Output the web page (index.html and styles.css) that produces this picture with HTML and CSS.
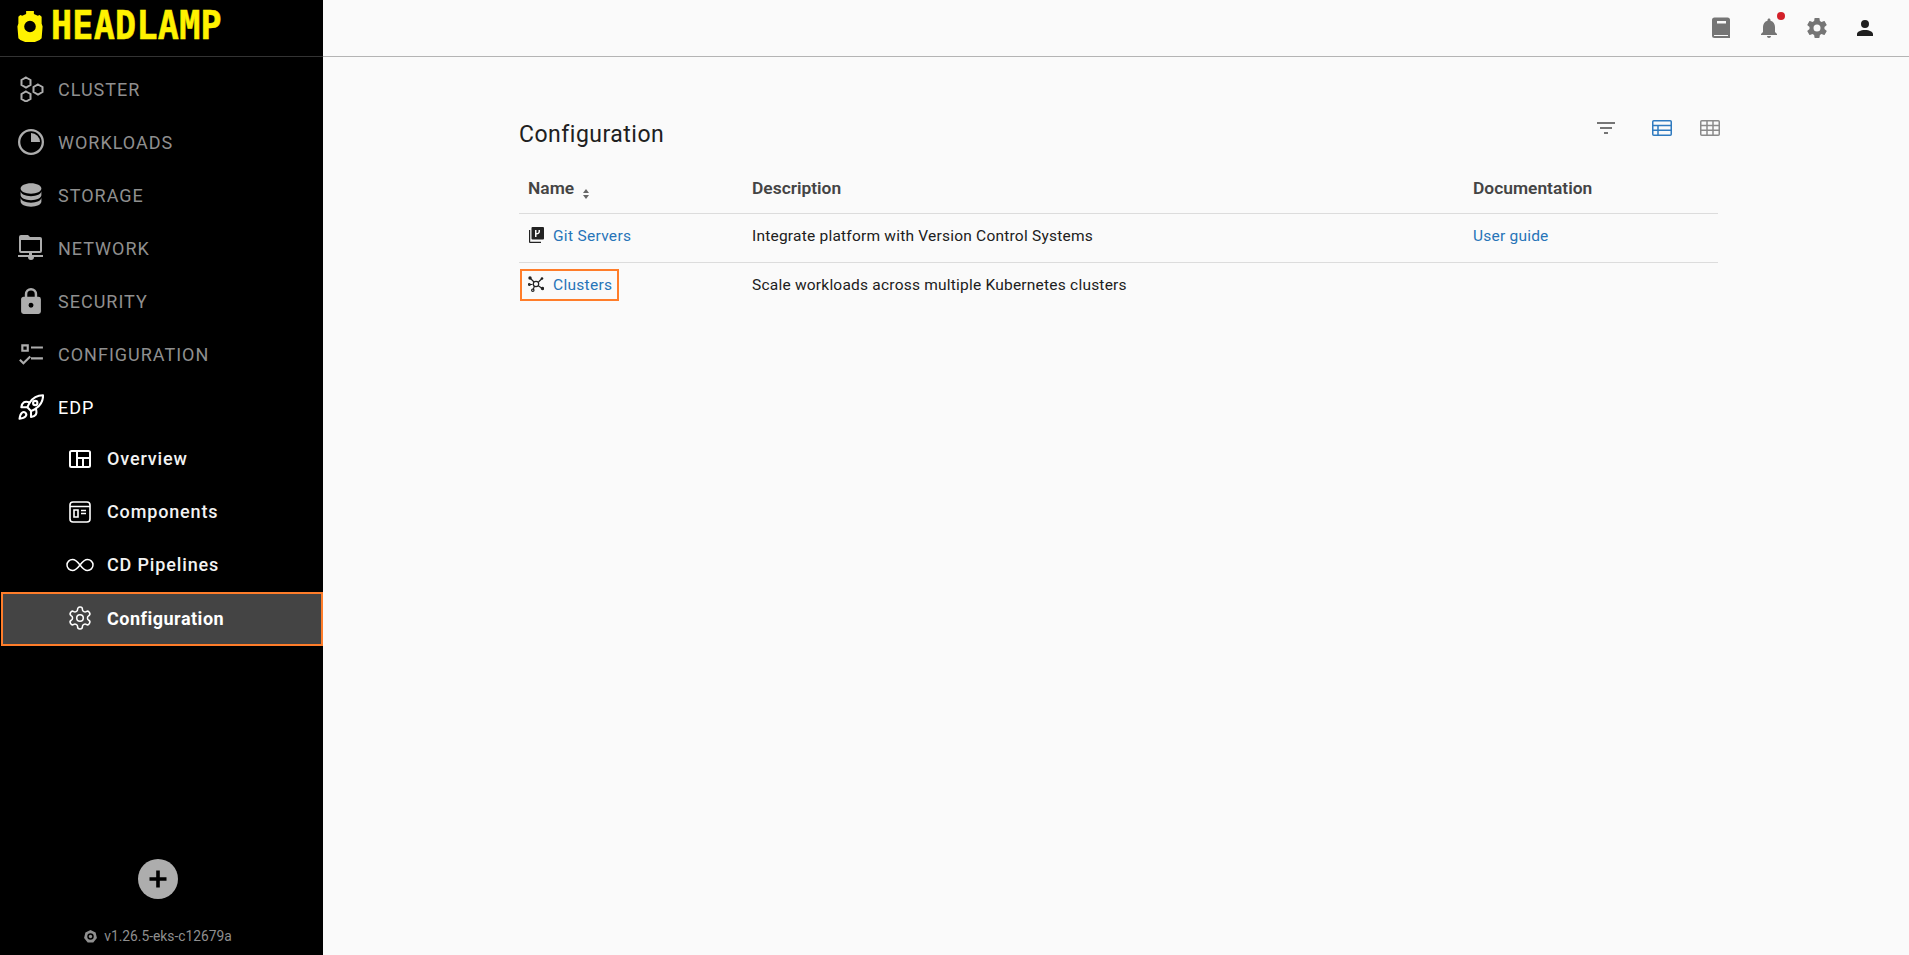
FILE: index.html
```html
<!DOCTYPE html>
<html lang="en">
<head>
    <meta charset="UTF-8">
    <title>Headlamp - Configuration</title>
    <link rel="stylesheet" href="styles.css">
</head>
<body>

<!-- Sidebar -->
<aside class="sidebar">
    <div class="logo">
        <svg class="logo-icon" viewBox="0 0 26 32"><path fill-rule="evenodd" d="M9 0h8v3l4 2 2-1 2 2v7l1 3-1 12-2 2-5 2H8l-5-2-2-2L0 16l1-3V6l2-2 2 1 4-2V0zm4 10a6 6 0 1 0 0 12 6 6 0 0 0 0-12z"/></svg>
        <span class="logo-text">HEADLAMP</span>
    </div>

    <nav class="nav">
        <a class="nav-item">
            <svg class="nav-icon nav-icon-line" viewBox="0 1 26 26" stroke="currentColor" stroke-width="2"><path d="M8 2.500l4.500 2.500v5L8 12.500 3.500 10V5zM8 16.500l4.500 2.500v5L8 26.500 3.500 24v-5zM20 9.500l4.500 2.500v5L20 19.500 15.500 17v-5z"/></svg>
            CLUSTER
        </a>
        <a class="nav-item">
            <svg class="nav-icon" viewBox="0 0 26 26"><path d="M13 0a13 13 0 1 0 0 26 13 13 0 0 0 0-26zm0 2.300a10.700 10.700 0 1 1 0 21.400 10.700 10.700 0 0 1 0-21.400z"/><path d="M13 4a9 9 0 0 1 9 9h-9z"/></svg>
            WORKLOADS
        </a>
        <a class="nav-item">
            <svg class="nav-icon" viewBox="2 2 20 20"><path d="M12,3C7.58,3 4,4.79 4,7C4,9.21 7.58,11 12,11C16.42,11 20,9.21 20,7C20,4.79 16.42,3 12,3M4,9V12C4,14.21 7.58,16 12,16C16.42,16 20,14.21 20,12V9C20,11.21 16.42,13 12,13C7.58,13 4,11.21 4,9M4,14V17C4,19.21 7.58,21 12,21C16.42,21 20,19.21 20,17V14C20,16.21 16.42,18 12,18C7.58,18 4,16.21 4,14Z"/></svg>
            STORAGE
        </a>
        <a class="nav-item">
            <svg class="nav-icon" viewBox="0 0 26 26"><path fill-rule="evenodd" d="M3 0h7l2 2h10a2 2 0 0 1 2 2v12a2 2 0 0 1-2 2h-8v2h11v2H16a3 3 0 0 1-6 0H0v-2h11v-2H3a2 2 0 0 1-2-2V2a2 2 0 0 1 2-2zm0 5v11h19V5z"/></svg>
            NETWORK
        </a>
        <a class="nav-item">
            <svg class="nav-icon" viewBox="3 1 18 21"><path d="M12,17A2,2 0 0,0 14,15C14,13.89 13.1,13 12,13A2,2 0 0,0 10,15A2,2 0 0,0 12,17M18,8A2,2 0 0,1 20,10V20A2,2 0 0,1 18,22H6A2,2 0 0,1 4,20V10C4,8.89 4.9,8 6,8H7V6A5,5 0 0,1 12,1A5,5 0 0,1 17,6V8H18M12,3A3,3 0 0,0 9,6V8H15V6A3,3 0 0,0 12,3Z"/></svg>
            SECURITY
        </a>
        <a class="nav-item">
            <svg class="nav-icon" viewBox="0 0 24 24"><path d="M3,3H10V10H3V3M5,5V8H8V5H5M12,5H23V7H12V5M12,15H23V17H12V15M5,22L1,18L2.400,16.600L5,19.200L10.600,13.600L12,15L5,22Z"/></svg>
            CONFIGURATION
        </a>
        <a class="nav-item nav-open">
            <svg class="nav-icon" viewBox="1.500 1 21 21.500" stroke="currentColor" stroke-width="1.700" stroke-linecap="round" stroke-linejoin="round"><path d="M4.500 16.500c-1.500 1.260-2 5-2 5s3.740-.5 5-2c.71-.84.7-2.130-.09-2.910a2.180 2.180 0 0 0-2.910-.09z"/><path d="m12 15-3-3a22 22 0 0 1 2-3.950A12.880 12.880 0 0 1 22 2c0 2.720-.78 7.500-6 11a22.350 22.350 0 0 1-4 2z"/><path d="M9 12H4s.55-3.030 2-4c1.620-1.080 5 0 5 0"/><path d="M12 15v5s3.030-.55 4-2c1.080-1.620 0-5 0-5"/><circle cx="15.500" cy="8.500" r="1.800"/></svg>
            EDP
        </a>
        <a class="nav-item sub-item">
            <svg class="sub-icon" viewBox="0 0 24 24" fill="none" stroke="currentColor" stroke-width="2"><rect x="2" y="4" width="20" height="16" rx="1.500"/><path d="M9 4v16M9 11h13M15 11v9"/></svg>
            Overview
        </a>
        <a class="nav-item sub-item">
            <svg class="sub-icon" viewBox="0 0 24 24" fill="none" stroke="currentColor" stroke-width="1.600"><rect x="2" y="2" width="20" height="20" rx="3"/><path d="M2 6.500h20M6 10h4v7H6zM13 10.500h5M13 13.500h5"/></svg>
            Components
        </a>
        <a class="nav-item sub-item">
            <svg class="sub-icon sub-wide" viewBox="0 0 28 14" fill="none" stroke="currentColor" stroke-width="1.500"><path d="M14 7C11 3 9 1.500 6.500 1.500a5.500 5.500 0 0 0 0 11C9 12.500 11 11 14 7c3-4 5-5.500 7.500-5.500a5.500 5.500 0 0 1 0 11C19 12.500 17 11 14 7z"/></svg>
            CD Pipelines
        </a>
        <a class="nav-item sub-item nav-active">
            <svg class="sub-icon" viewBox="1 1 22 22" fill="none" stroke="currentColor" stroke-width="1.400"><path d="M12.220 2h-.44a2 2 0 0 0-2 2v.18a2 2 0 0 1-1 1.730l-.43.25a2 2 0 0 1-2 0l-.15-.08a2 2 0 0 0-2.730.73l-.22.38a2 2 0 0 0 .73 2.730l.15.1a2 2 0 0 1 1 1.720v.51a2 2 0 0 1-1 1.740l-.15.09a2 2 0 0 0-.73 2.730l.22.38a2 2 0 0 0 2.730.73l.15-.08a2 2 0 0 1 2 0l.43.25a2 2 0 0 1 1 1.730V20a2 2 0 0 0 2 2h.44a2 2 0 0 0 2-2v-.18a2 2 0 0 1 1-1.730l.43-.25a2 2 0 0 1 2 0l.15.08a2 2 0 0 0 2.730-.73l.22-.39a2 2 0 0 0-.73-2.730l-.15-.08a2 2 0 0 1-1-1.740v-.5a2 2 0 0 1 1-1.740l.15-.09a2 2 0 0 0 .73-2.730l-.22-.38a2 2 0 0 0-2.730-.73l-.15.08a2 2 0 0 1-2 0l-.43-.25a2 2 0 0 1-1-1.730V4a2 2 0 0 0-2-2z"/><circle cx="12" cy="12" r="3"/></svg>
            Configuration
        </a>
    </nav>

    <div class="sidebar-footer">
        <button class="add-btn">
            <svg viewBox="0 0 24 24"><path d="M10.200 3.500h3.600v6.700h6.700v3.600h-6.700v6.700h-3.600v-6.700H3.500v-3.600h6.700z"/></svg>
        </button>
        <div class="version">
            <svg viewBox="0 0 14 14"><path fill-rule="evenodd" d="M7 0l5.500 2.700 1.400 6L10 13.500H4L.1 8.700l1.400-6zm0 3.500a3.500 3.500 0 1 0 0 7 3.500 3.500 0 0 0 0-7z"/><circle cx="7" cy="7" r="1.800"/></svg>
            v1.26.5-eks-c12679a
        </div>
    </div>
</aside>

<!-- Main part -->
<div class="main">
    <header class="topbar">
        <div class="icon-btn">
            <svg viewBox="0 0 24 24"><path fill-rule="evenodd" d="M5.500 1.500h13A2.500 2.500 0 0 1 21 4v18H5.500A2.500 2.500 0 0 1 3 19.500V4a2.500 2.500 0 0 1 2.500-2.500zM8 5v2.500h9V5zM5 19v.5a.5.5 0 0 0 .5.5H19v-1z"/></svg>
        </div>
        <div class="icon-btn bell">
            <svg viewBox="0 0 24 24"><path d="M12 22c1.100 0 2-.9 2-2h-4c0 1.100.89 2 2 2zm6-6v-5c0-3.070-1.640-5.640-4.500-6.320V4c0-.83-.67-1.500-1.500-1.500s-1.500.67-1.500 1.500v.68C7.630 5.360 6 7.920 6 11v5l-2 2v1h16v-1l-2-2z"/></svg>
            <span class="badge"></span>
        </div>
        <div class="icon-btn">
            <svg viewBox="0 0 24 24"><path d="M12,15.500A3.500,3.500 0 0,1 8.500,12A3.500,3.500 0 0,1 12,8.500A3.500,3.500 0 0,1 15.500,12A3.500,3.500 0 0,1 12,15.500M19.430,12.970C19.470,12.650 19.500,12.330 19.500,12C19.500,11.670 19.470,11.340 19.430,11L21.540,9.370C21.730,9.220 21.780,8.950 21.660,8.730L19.660,5.270C19.540,5.050 19.270,4.960 19.050,5.050L16.560,6.050C16.040,5.660 15.500,5.320 14.870,5.070L14.500,2.420C14.460,2.180 14.250,2 14,2H10C9.750,2 9.540,2.180 9.500,2.420L9.130,5.070C8.500,5.320 7.960,5.660 7.440,6.050L4.950,5.050C4.730,4.960 4.460,5.050 4.340,5.270L2.340,8.730C2.210,8.950 2.270,9.220 2.460,9.370L4.570,11C4.530,11.340 4.500,11.670 4.500,12C4.500,12.330 4.530,12.650 4.570,12.970L2.460,14.630C2.270,14.780 2.210,15.050 2.340,15.270L4.340,18.730C4.460,18.950 4.730,19.030 4.950,18.950L7.440,17.940C7.960,18.340 8.500,18.680 9.130,18.930L9.500,21.580C9.540,21.820 9.750,22 10,22H14C14.250,22 14.460,21.820 14.500,21.580L14.870,18.930C15.500,18.670 16.040,18.340 16.560,17.940L19.050,18.950C19.270,19.030 19.540,18.950 19.660,18.730L21.660,15.270C21.780,15.050 21.730,14.780 21.540,14.630L19.430,12.970Z"/></svg>
        </div>
        <div class="icon-btn user">
            <svg viewBox="0 0 24 24"><path d="M12,4A4,4 0 0,1 16,8A4,4 0 0,1 12,12A4,4 0 0,1 8,8A4,4 0 0,1 12,4M12,14C16.420,14 20,15.790 20,18V20H4V18C4,15.790 7.580,14 12,14Z"/></svg>
        </div>
    </header>

    <main class="content">
        <div class="title-row">
            <h1 class="title">Configuration</h1>
            <div class="view-tools">
                <svg class="tool filter" viewBox="0 0 24 24"><path d="M10 18h4v-2h-4v2zM3 6v2h18V6H3zm3 7h12v-2H6v2z"/></svg>
                <svg class="tool tool-on" viewBox="0 0 24 24" fill="none" stroke="currentColor" stroke-width="1.500"><rect x="2.750" y="4.750" width="18.500" height="14.500" rx="1"/><path d="M3 9.500h18M3 14.300h18M8 9.500v9.700"/></svg>
                <svg class="tool" viewBox="0 0 24 24" fill="none" stroke="currentColor" stroke-width="1.500"><rect x="2.750" y="4.750" width="18.500" height="14.500" rx="1"/><path d="M3 9.500h18M3 14.300h18M9 5v14M15 5v14"/></svg>
            </div>
        </div>

        <table class="config-table">
            <thead>
                <tr>
                    <th class="col-name">Name <span class="sort"><i class="up"></i><i class="down"></i></span></th>
                    <th class="col-desc">Description</th>
                    <th>Documentation</th>
                </tr>
            </thead>
            <tbody>
                <tr>
                    <td>
                        <a class="row-link">
                            <svg viewBox="0 0 16 16"><path fill-rule="evenodd" d="M4.500 0H15a1 1 0 0 1 1 1v10.500a1 1 0 0 1-1 1H4.500a1 1 0 0 1-1-1V1a1 1 0 0 1 1-1zM7 3v7h1.500V7.500c1.800 0 3.500-1 3.500-3V3h-1.500v1.500c0 1-.8 1.500-2 1.500V3z"/><path d="M1 3h1.200v11.800H13V16H2a1 1 0 0 1-1-1z"/></svg>
                            Git Servers
                        </a>
                    </td>
                    <td>Integrate platform with Version Control Systems</td>
                    <td><a class="doc-link">User guide</a></td>
                </tr>
                <tr>
                    <td>
                        <a class="row-link row-focus">
                            <svg viewBox="0 0 16 16" fill="none" stroke="currentColor" stroke-width="1.200"><path d="M2 2l4 4M14 2.500L10.500 6M1.500 8.500h3M14.500 12.500L10.500 10M5 14l1.500-4"/><circle cx="8" cy="8" r="2.700"/><g fill="currentColor" stroke="none"><circle cx="2" cy="2" r="1.700"/><circle cx="14" cy="2.500" r="1.300"/><circle cx="14.500" cy="12.500" r="1.700"/></g><circle cx="4.800" cy="14.200" r="1.200"/><circle cx="1.300" cy="8.500" r=".9"/></svg>
                            Clusters
                        </a>
                    </td>
                    <td>Scale workloads across multiple Kubernetes clusters</td>
                    <td></td>
                </tr>
            </tbody>
        </table>
    </main>
</div>

</body>
</html>
```

FILE: styles.css
```css
* {
    box-sizing: border-box;
}

body {
    margin: 0;
    height: 955px;
    overflow: hidden;
    display: flex;
    font-family: Roboto, "Noto Sans", sans-serif;
    background-color: #fafafa;
    color: #202020;
}

/* Sidebar */
.sidebar {
    width: 323px;
    flex-shrink: 0;
    background-color: #000;
    color: #adadad;
    display: flex;
    flex-direction: column;
}

.logo {
    height: 57px;
    border-bottom: 1px solid #333;
    padding: 0 0 3px 17px;
    display: flex;
    align-items: center;
    gap: 8px;
    color: #fff200;
}

.logo-icon {
    width: 26px;
    height: 31px;
    fill: currentColor;
}

.logo-text {
    font-family: "DejaVu Sans Mono", monospace;
    font-weight: 700;
    font-size: 35px;
    letter-spacing: 0.3px;
    line-height: 1;
    transform: scaleY(1.1);
    transform-origin: left center;
    -webkit-text-stroke: 0.5px currentColor;
}

.nav {
    padding-top: 5px;
    display: flex;
    flex-direction: column;
}

.nav-item {
    height: 53px;
    display: flex;
    align-items: center;
    padding-left: 18px;
    padding-top: 1px;
    font-size: 18px;
    letter-spacing: 1px;
    color: #8f8f8f;
}

.nav-icon {
    width: 26px;
    height: 26px;
    margin-right: 14px;
    fill: #adadad;
    color: #adadad;
    flex-shrink: 0;
}

.nav-icon-line {
    fill: none;
}

.nav-open {
    color: #fff;
}

.nav-open .nav-icon {
    color: #fff;
    fill: none;
}

.sub-item {
    padding-left: 68px;
    padding-top: 0;
    padding-bottom: 2px;
    color: #f2f2f2;
    letter-spacing: 0.85px;
    font-weight: 500;
}

.sub-icon {
    width: 24px;
    height: 24px;
    margin-right: 15px;
    color: #fff;
    flex-shrink: 0;
}

.sub-wide {
    width: 28px;
    height: 14px;
    margin-left: -2px;
    margin-right: 13px;
}

.nav-active {
    height: 54px;
    margin-left: 1px;
    background-color: #444;
    outline: 2px solid #ff7d2a;
    outline-offset: -2px;
    padding-left: 67px;
    font-weight: 700;
    letter-spacing: 0.5px;
    color: #fff;
}

.sidebar-footer {
    margin-top: auto;
    padding: 0 7px 9px 0;
    display: flex;
    flex-direction: column;
    align-items: center;
}

.add-btn {
    width: 40px;
    height: 40px;
    padding: 8px;
    border: none;
    border-radius: 50%;
    background-color: #adadad;
    margin-bottom: 27px;
}

.add-btn svg {
    display: block;
    fill: #000;
}

.version {
    display: flex;
    align-items: center;
    gap: 7px;
    font-size: 13.8px;
    line-height: 20px;
    color: #8f8f8f;
}

.version svg {
    width: 13px;
    height: 13px;
    fill: #8f8f8f;
}

/* Main */
.main {
    flex: 1;
    min-width: 0;
}

.topbar {
    height: 57px;
    border-bottom: 1px solid #b4b4b4;
    padding-right: 32px;
    padding-bottom: 1px;
    display: flex;
    justify-content: flex-end;
    align-items: center;
    gap: 24px;
}

.icon-btn {
    position: relative;
    width: 24px;
    height: 24px;
    fill: #757575;
}

.icon-btn svg {
    display: block;
}

.user {
    fill: #1f1f1f;
}

.badge {
    position: absolute;
    top: -4px;
    right: -4px;
    width: 8px;
    height: 8px;
    border-radius: 50%;
    background-color: #d32029;
}

.content {
    padding: 60px 191px 0 196px;
}

.title-row {
    display: flex;
    justify-content: space-between;
    align-items: flex-start;
    height: 47px;
}

.title {
    margin: 0;
    font-size: 23px;
    font-weight: 400;
    line-height: 36px;
    letter-spacing: 0.5px;
}

.view-tools {
    display: flex;
    gap: 24px;
    margin-top: -1px;
    margin-right: -4px;
}

.tool {
    width: 24px;
    height: 24px;
    color: #8a8a8a;
    fill: none;
}

.filter {
    fill: #757575;
    margin-right: 8px;
}

.tool-on {
    color: #2f7abf;
}

.config-table {
    width: 100%;
    border-collapse: collapse;
    font-size: 15.5px;
    table-layout: fixed;
}

.config-table th {
    height: 49px;
    padding: 0 9px;
    text-align: left;
    font-size: 17.4px;
    font-weight: 600;
    color: #444;
    border-bottom: 1px solid #dcdcdc;
}

.config-table td {
    height: 49px;
    padding: 0 9px 3px;
    letter-spacing: 0.22px;
}

.config-table tbody tr:first-child td {
    border-bottom: 1px solid #dcdcdc;
}

.col-name {
    width: 224px;
}

.col-desc {
    width: 721px;
}

.sort {
    display: inline-flex;
    flex-direction: column;
    gap: 2px;
    margin-left: 5px;
    vertical-align: 1px;
}

.sort i {
    display: block;
    width: 0;
    height: 0;
    border-left: 3px solid transparent;
    border-right: 3px solid transparent;
}

.sort .up {
    border-bottom: 4px solid #666;
}

.sort .down {
    border-top: 4px solid #666;
}

.row-link {
    display: inline-flex;
    align-items: center;
    gap: 9px;
    color: #2774b8;
    letter-spacing: 0.3px;
    vertical-align: middle;
}

.row-link svg {
    width: 16px;
    height: 16px;
    fill: #222;
    color: #222;
    margin-top: -3px;
}

.row-focus {
    margin-left: -8px;
    padding: 5px 7px 5px 8px;
    outline: 2px solid #ff7d2a;
    outline-offset: -2px;
    height: 32px;
}

.row-focus svg {
    fill: none;
}

.doc-link {
    color: #2774b8;
}
```
